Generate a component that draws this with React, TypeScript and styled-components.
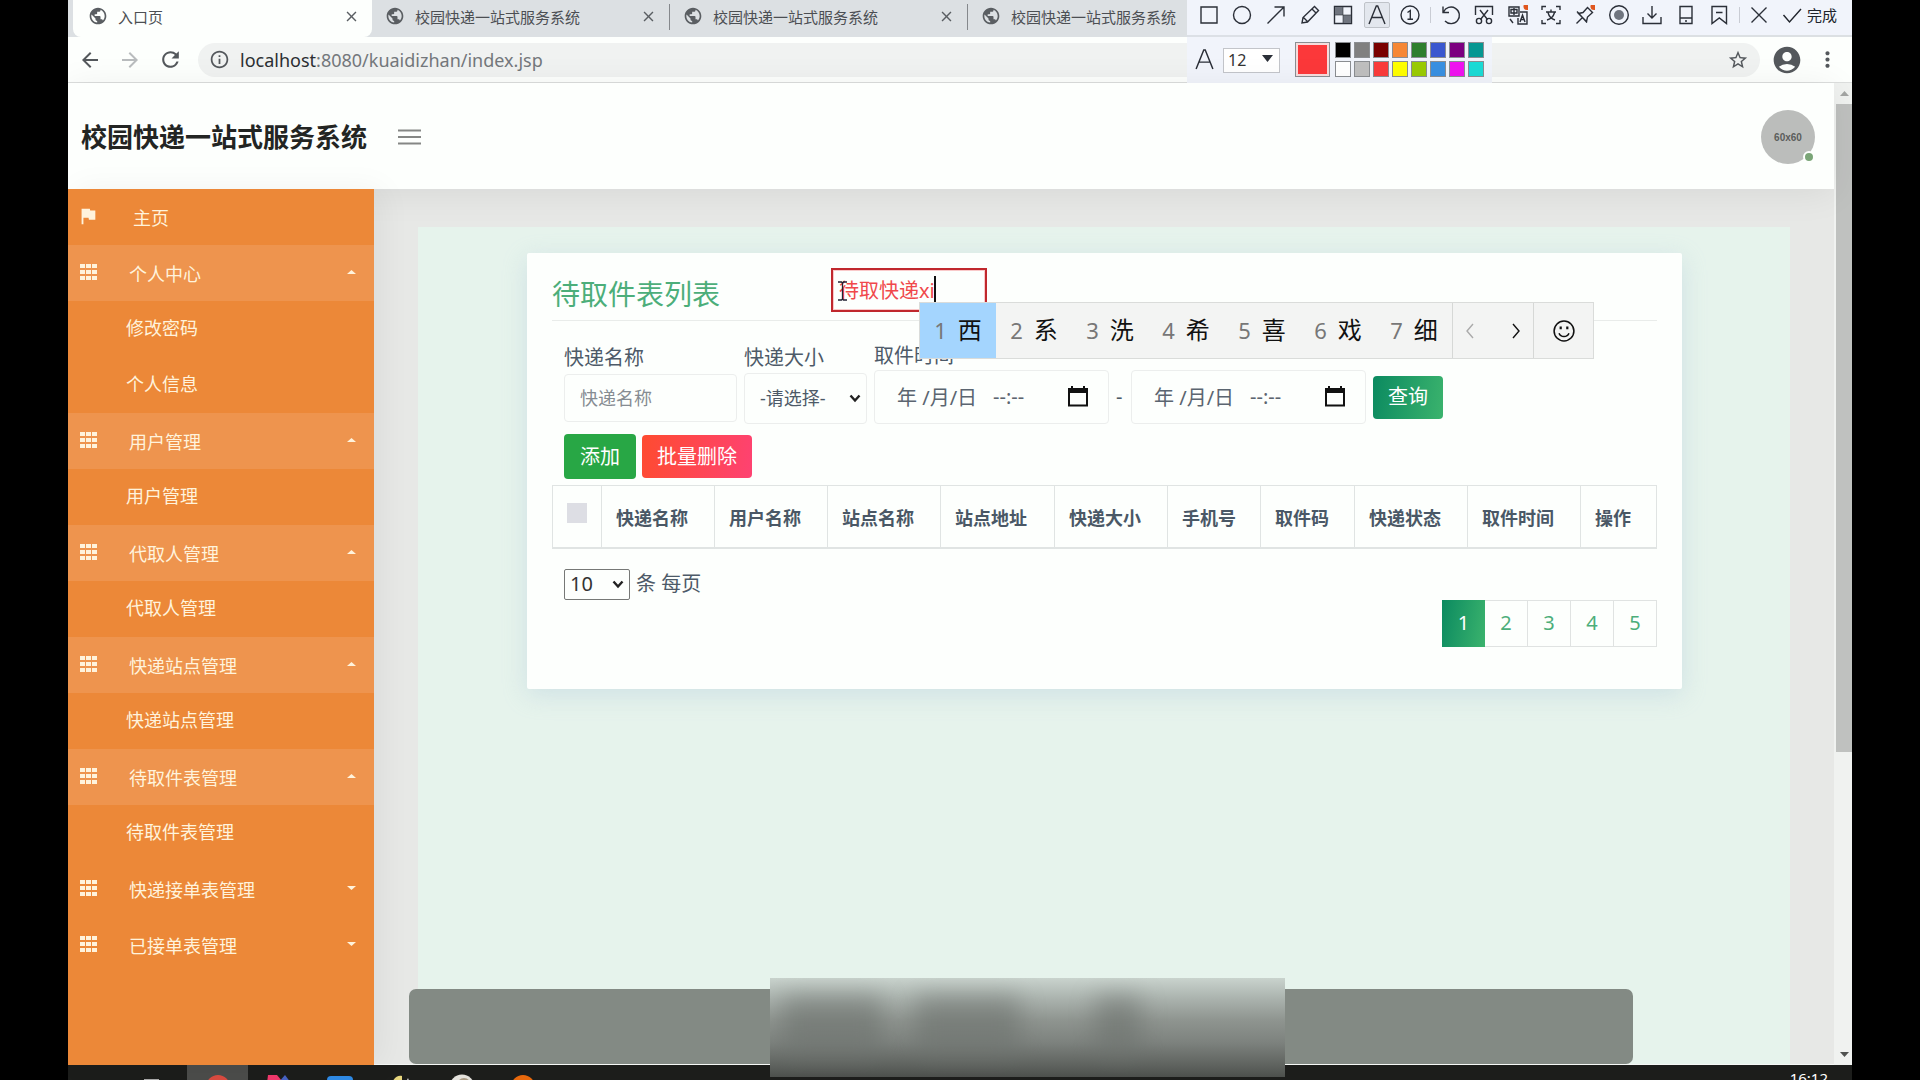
import React from "react";
import styled, { createGlobalStyle, css } from "styled-components";
import {
  MdPublic,
  MdArrowBack,
  MdArrowForward,
  MdRefresh,
  MdInfoOutline,
  MdStarBorder,
  MdAccountCircle,
  MdMoreVert,
  MdFlag,
  MdClose,
} from "react-icons/md";

const GlobalStyle = createGlobalStyle`
  *, *::before, *::after { box-sizing: border-box; }
  body {
    margin: 0;
    background: #000;
    font-family: "Noto Sans", "Noto Sans CJK SC", sans-serif;
    font-size: 20px;
    color: #4d5a68;
  }
  button, input, select { font: inherit; color: inherit; margin: 0; }
  button { border: 0; padding: 0; background: none; cursor: pointer; }
  a { color: inherit; text-decoration: none; }
  svg { display: block; flex: none; }
`;

const accent = "#4cae7a";
const greenGradient = "linear-gradient(100deg, #0b8a60, #3bb36d)";

/* ---------- window ---------- */

const Screen = styled.div`
  display: flex;
  flex-direction: column;
  position: relative;
  height: 100vh;
  margin: 0 68px;
  overflow: hidden;
  background: #fdfffd;
`;

const TabStrip = styled.div`
  display: flex;
  flex: none;
  height: 37px;
  padding-left: 5px;
  background: #dce0e3;
`;

const Tab = styled.div<{ $active?: boolean }>`
  display: flex;
  align-items: center;
  width: ${(p) => (p.$active ? 299 : 297)}px;
  height: 37px;
  padding: 0 12px 5px ${(p) => (p.$active ? 15 : 13)}px;
  gap: 10px;
  font-size: 15px;
  color: #4c4f53;
  background: ${(p) => (p.$active ? "#fdfffd" : "transparent")};
  border-radius: 0 0 8px 8px;
  svg { color: #5a5e62; }
`;

const TabTitle = styled.span`
  flex: 1;
  white-space: nowrap;
`;

const TabDivider = styled.span`
  width: 1px;
  height: 26px;
  margin-top: 4px;
  background: #85888c;
`;

const AddressRow = styled.div`
  display: flex;
  align-items: center;
  flex: none;
  height: 46px;
  padding: 0 12px 0 10px;
  border-bottom: 1px solid #dcdedd;
  color: #54585c;
`;

const NavButton = styled.button<{ $dim?: boolean }>`
  display: flex;
  justify-content: center;
  width: 24px;
  margin-right: 16px;
  color: ${(p) => (p.$dim ? "#b9bcbe" : "#54585c")};
`;

const AddressBar = styled.div`
  display: flex;
  align-items: center;
  flex: 1;
  height: 34px;
  padding: 0 11px;
  border-radius: 17px;
  background: #f0f2f1;
`;

const AddressText = styled.a`
  flex: 1;
  padding-left: 10px;
  font-family: "Noto Sans", sans-serif;
  font-size: 18px;
  line-height: 24px;
  color: #74787c;
  b { font-weight: 400; color: #2c2f32; }
`;

const BarButton = styled.button`
  display: flex;
  justify-content: center;
  color: #54585c;
`;

const BarActions = styled.div`
  display: flex;
  align-items: center;
  gap: 12px;
  padding-left: 11px;
`;

/* ---------- capture toolbar ---------- */

const Capture = styled.div`
  position: absolute;
  top: 0;
  right: 0;
  width: 665px;
  color: #2b2f38;
`;

const CaptureTools = styled.div`
  display: flex;
  align-items: center;
  height: 35px;
  padding: 0 10px 5px 5px;
  background: #f1f4fb;
`;

const ToolGroup = styled.div<{ $width: number }>`
  display: flex;
  width: ${(p) => p.$width}px;
`;

const Tool = styled.button<{ $on?: boolean }>`
  display: flex;
  flex: 1;
  justify-content: center;
  svg {
    box-sizing: content-box;
    padding: 2px;
    border: 1px solid ${(p) => (p.$on ? "#bfc3c9" : "transparent")};
    border-radius: 2px;
    background: ${(p) => (p.$on ? "#e3e7ee" : "none")};
  }
`;

const ToolDivider = styled.span`
  width: 1px;
  height: 16px;
  margin: 0 3px;
  background: #c9ccd4;
`;

const DoneButton = styled.button`
  display: flex;
  align-items: center;
  gap: 5px;
  margin-left: 7px;
  font-size: 15px;
  line-height: 20px;
  color: #20242c;
  white-space: nowrap;
`;

const CaptureOptions = styled.div`
  display: flex;
  align-items: center;
  width: 305px;
  height: 48px;
  padding: 2px 0 4px 7px;
  border-top: 2px solid #dce0e6;
  background: #f1f4fb;
`;

const SizeSelect = styled.div`
  position: relative;
  margin: 0 15px 0 8px;
  select {
    width: 57px;
    height: 25px;
    padding: 0 4px;
    appearance: none;
    border: 1px solid #c3c5ca;
    background: #fff;
    font-size: 16px;
    line-height: 22px;
    color: #333;
  }
  svg { position: absolute; right: 7px; top: 10px; pointer-events: none; }
`;

const Swatch = styled.button<{ $color: string; $large?: boolean }>`
  flex: none;
  width: ${(p) => (p.$large ? 35 : 16)}px;
  height: ${(p) => (p.$large ? 35 : 16)}px;
  border: 1px solid #8b8e92;
  background: ${(p) => p.$color};
  ${(p) => p.$large && css`box-shadow: inset 0 0 0 2px #f6dcdc;`}
`;

const Palette = styled.div`
  display: grid;
  grid-template-columns: repeat(8, 1fr);
  width: 149px;
  gap: 3px;
  margin-left: 5px;
`;

/* ---------- page ---------- */

const Viewport = styled.div`
  display: flex;
  flex: 1;
  min-height: 0;
`;

const Page = styled.div`
  display: flex;
  flex: 1;
  flex-direction: column;
  min-width: 0;
`;

const Header = styled.header`
  display: flex;
  align-items: center;
  flex: none;
  height: 106px;
  padding: 2px 19px 0 13px;
  position: relative;
  z-index: 1;
  background: #fdfffd;
  box-shadow: 0 4px 34px rgba(0, 0, 0, 0.07);
`;

const Brand = styled.h1`
  margin: 0 31px 0 0;
  font-size: 26px;
  line-height: 40px;
  font-weight: 700;
  color: #232523;
`;

const MenuToggle = styled.button`
  margin-right: auto;
  color: #858785;
`;

const Avatar = styled.button`
  display: flex;
  align-items: center;
  justify-content: center;
  position: relative;
  width: 54px;
  height: 54px;
  border-radius: 50%;
  background: #bbbdbb;
  font-family: "Liberation Sans", sans-serif;
  font-size: 10px;
  font-weight: 700;
  color: #5b5d5b;
  &::after {
    content: "";
    position: absolute;
    right: 0;
    bottom: 1px;
    width: 12px;
    height: 12px;
    border: 2px solid #fdfffd;
    border-radius: 50%;
    background: #7aa577;
  }
`;

const Body = styled.div`
  display: flex;
  flex: 1;
  min-height: 0;
`;

const Sidebar = styled.nav`
  flex: none;
  position: relative;
  z-index: 2;
  width: 306px;
  background: #ec8838;
  color: #fff3dc;
  box-shadow: 8px 0 30px rgba(0, 0, 0, 0.05);
`;

const MenuItem = styled.button<{ $open?: boolean; $home?: boolean }>`
  display: flex;
  align-items: center;
  width: 100%;
  height: 56px;
  padding: 0 18px 2px ${(p) => (p.$home ? 9 : 12)}px;
  font-size: 18px;
  line-height: 28px;
  text-align: left;
  background: ${(p) => (p.$open ? "#ee944e" : "transparent")};
  span { flex: 1; padding: 3px 0 0 ${(p) => (p.$home ? 34 : 32)}px; }
`;

const SubItem = styled.a`
  display: flex;
  align-items: center;
  height: 56px;
  padding: 0 0 2px 58px;
  font-size: 18px;
  line-height: 28px;
`;

const Main = styled.main`
  display: flex;
  flex: 1;
  min-width: 0;
  padding: 38px 44px 0;
  background: #e7e8e6;
  border-bottom: 1px solid #f6f8f6;
`;

const Panel = styled.div`
  flex: 1;
  min-width: 0;
  padding: 26px 108px 0 109px;
  background: #e6f3ec;
`;

const Card = styled.section`
  padding: 21px 25px 42px;
  border-radius: 2px;
  background: #fdfffd;
  box-shadow: 0 6px 24px rgba(160, 190, 215, 0.32);
`;

const CardTitle = styled.h2`
  margin: 0;
  padding-bottom: 6px;
  border-bottom: 1px solid #e9ecea;
  font-size: 28px;
  line-height: 40px;
  font-weight: 400;
  color: ${accent};
`;

const Filters = styled.form`
  display: flex;
  align-items: flex-end;
  gap: 7px;
  padding: 21px 0 0 12px;
`;

const Control = styled.div`
  display: flex;
  align-items: center;
  height: 54px;
`;

const Field = styled.div<{ $compact?: boolean }>`
  display: flex;
  flex-direction: column;
  label { line-height: 28px; white-space: nowrap; }
  ${(p) => p.$compact && css`${Control} { height: 52px; }`}
`;

const boxed = css`
  border: 1px solid #eceeed;
  border-radius: 4px;
  background: #fdfffd;
`;

const NameInput = styled.input`
  ${boxed}
  width: 173px;
  height: 48px;
  padding: 0 15px;
  font-size: 18px;
  &::placeholder { color: #868c92; opacity: 1; }
`;

const SelectBox = styled.div<{ $pager?: boolean }>`
  display: flex;
  position: relative;
  align-items: center;
  select {
    appearance: none;
    ${boxed}
    width: ${(p) => (p.$pager ? 66 : 123)}px;
    height: ${(p) => (p.$pager ? 31 : 51)}px;
    padding: 0 ${(p) => (p.$pager ? 5 : 15)}px;
    font-size: ${(p) => (p.$pager ? 20 : 18)}px;
    line-height: 28px;
    ${(p) => p.$pager && css`border-color: #767876; border-radius: 2px; color: #333;`}
  }
  svg { position: absolute; right: 6px; pointer-events: none; }
`;

const DateBox = styled.div`
  ${boxed}
  display: flex;
  align-items: center;
  width: 235px;
  height: 54px;
  padding: 0 20px 2px 22px;
  color: #111;
  input {
    width: 96px;
    padding: 0;
    border: 0;
    background: none;
    color: #5b6570;
  }
  input + input { flex: 1; min-width: 0; }
`;

const Dash = styled.span`
  width: 8px;
  line-height: 54px;
`;

const ActionButton = styled.button<{ $tone: "query" | "add" | "remove" }>`
  height: ${(p) => (p.$tone === "add" ? 45 : 43)}px;
  padding: 0 ${(p) => (p.$tone === "add" ? 16 : 15)}px;
  border-radius: 4px;
  line-height: 28px;
  color: #fff;
  white-space: nowrap;
  background: ${(p) =>
    ({
      query: greenGradient,
      add: "#28a745",
      remove: "linear-gradient(100deg, #fe4b30, #fe4272)",
    })[p.$tone]};
`;

const Actions = styled.div`
  display: flex;
  align-items: center;
  gap: 6px;
  padding: 10px 0 6px 12px;
`;

const Table = styled.table`
  width: 100%;
  table-layout: fixed;
  border-collapse: collapse;
  font-size: 18px;
  th {
    height: 62px;
    padding: 4px 0 0 14px;
    border: 1px solid #e0e4e3;
    border-bottom-width: 2px;
    text-align: left;
    font-weight: 700;
    line-height: 26px;
    white-space: nowrap;
    color: #4a5866;
  }
`;

const CheckAll = styled.input`
  display: block;
  appearance: none;
  width: 20px;
  height: 20px;
  margin: -10px 0 0;
  background: #dddee4;
`;

const PageSize = styled.div`
  display: flex;
  align-items: center;
  gap: 6px;
  padding: 20px 0 0 12px;
  line-height: 28px;
`;

const Pagination = styled.div`
  display: flex;
  justify-content: flex-end;
`;

const PageLink = styled.a<{ $active?: boolean }>`
  width: 43px;
  height: 47px;
  border: 1px solid #e0e3e2;
  border-left-width: ${(p) => (p.$active ? 1 : 0)}px;
  text-align: center;
  line-height: 44px;
  color: ${accent};
  ${(p) => p.$active && css`border-color: transparent; background: ${greenGradient} border-box; color: #fff;`}
`;

const Scrollbar = styled.div`
  display: flex;
  flex: none;
  flex-direction: column;
  align-items: center;
  width: 18px;
  padding-left: 2px;
  background: #f0f2f0;
`;

const ScrollThumb = styled.div`
  width: 100%;
  height: 66%;
  margin-bottom: auto;
  background: #bfc1bf;
`;

const ScrollArrow = styled.button<{ $dim?: boolean }>`
  display: flex;
  align-items: center;
  justify-content: center;
  flex: none;
  width: 16px;
  height: 21px;
  color: ${(p) => (p.$dim ? "#a3a5a3" : "#505250")};
`;

/* ---------- overlays ---------- */

const Annotation = styled.div`
  display: flex;
  align-items: center;
  position: absolute;
  left: 763px;
  top: 268px;
  width: 156px;
  height: 44px;
  padding: 0 0 2px 6px;
  border: 2px solid #c0282d;
  outline: 1px solid #f9c9c9;
  outline-offset: -3px;
  input {
    width: 95px;
    padding: 0;
    border: 0;
    background: none;
    color: #f0484b;
  }
  svg { position: absolute; left: 5px; top: 11px; }
`;

const Caret = styled.span`
  width: 2px;
  height: 26px;
  background: #111;
`;

const Ime = styled.div`
  display: flex;
  position: absolute;
  left: 851px;
  top: 302px;
  height: 57px;
  border: 1px solid #dadcda;
  background: #f3f4f3;
  color: #111;
`;

const Candidate = styled.button<{ $active?: boolean }>`
  display: flex;
  align-items: center;
  justify-content: center;
  gap: 11px;
  width: 76px;
  padding-bottom: 2px;
  font-size: 24px;
  line-height: 32px;
  background: ${(p) => (p.$active ? "#a4d5fe" : "none")};
  span { font-size: 22px; color: #777; }
`;

const ImeButtons = styled.div<{ $width: number }>`
  display: flex;
  align-items: center;
  justify-content: space-between;
  width: ${(p) => p.$width}px;
  padding: 0 ${(p) => (p.$width > 70 ? 7 : 19)}px;
  border-left: 1px solid #d6d8d6;
  button:disabled { color: #aaa; }
`;

const Caption = styled.div`
  position: absolute;
  left: 341px;
  right: 219px;
  bottom: 16px;
  height: 75px;
  border-radius: 7px;
  background: #838a84;
`;

const CaptionBlur = styled.div`
  position: absolute;
  left: 361px;
  top: -11px;
  width: 515px;
  height: 99px;
  overflow: hidden;
  background: linear-gradient(#c9d3cd 0, #a9b1ac 22%, #8f9590 42%, #7d827e 65%, #5f635f 88%, #4d504d);
`;

const Smudge = styled.i<{ $left: number; $width: number }>`
  position: absolute;
  top: 18px;
  left: ${(p) => p.$left}px;
  width: ${(p) => p.$width}px;
  height: 58px;
  background: #6b706c;
  opacity: 0.55;
  filter: blur(12px);
`;

const Taskbar = styled.footer`
  flex: none;
  display: flex;
  height: 15px;
  overflow: hidden;
  padding: 0 24px 0 58px;
  background: #1c1d1b;
  color: #fff;
`;

const TaskButton = styled.button<{ $active?: boolean }>`
  display: flex;
  align-items: flex-start;
  justify-content: center;
  width: 61px;
  height: 50px;
  padding-top: 9px;
  background: ${(p) => (p.$active ? "#4b4c4a" : "none")};
`;

const Clock = styled.time`
  margin-left: auto;
  padding-top: 3px;
  font-size: 15px;
  line-height: 20px;
`;

/* ---------- drawings ---------- */

const Stroke = ({ children, size = 20 }: { children: React.ReactNode; size?: number }) => (
  <svg width={size} height={size} viewBox="0 0 20 20" fill="none" stroke="currentColor" strokeWidth="1.4">
    {children}
  </svg>
);

const GridIcon = () => (
  <svg width="17" height="16" viewBox="0 0 17 16" fill="currentColor">
    {[0, 6, 12].map((x) => [0, 6, 12].map((y) => <rect key={`${x}-${y}`} x={x} y={y} width="5" height="4" />))}
  </svg>
);

const Triangle = ({ up, w = 9, h = 4 }: { up?: boolean; w?: number; h?: number }) => (
  <svg width={w} height={h} viewBox="0 0 10 5" preserveAspectRatio="none" fill="currentColor">
    <path d={up ? "M0 5 5 0l5 5z" : "M0 0h10L5 5z"} />
  </svg>
);

const Chevron = () => (
  <svg width="12" height="9" viewBox="0 0 12 9" fill="none" stroke="#222" strokeWidth="2.4">
    <path d="M1.500 1.500 6 6.500l4.500-5" />
  </svg>
);

const CalendarIcon = () => (
  <svg width="20" height="21" viewBox="0 0 20 21">
    <path d="M4 0v4M16 0v4" stroke="#111" strokeWidth="2" />
    <path d="M1 3h18v16.500H1z" fill="none" stroke="#111" strokeWidth="2" />
    <path d="M0 2h20v5H0z" fill="#111" />
  </svg>
);

const letterShape = <path d="M2 19 9.300 1h1.400L18 19M5 12.500h10" />;

const drawTools: [string, React.ReactNode][] = [
  ["矩形", <path d="M2 2h16v16H2z" />],
  ["椭圆", <circle cx="10" cy="10" r="8.500" />],
  ["箭头", <path d="M1.500 18.500 18 2M8.500 2H18v9.500" />],
  ["画笔", <path d="M2 18l1-5.500L14.500 1.500l4 4L7.500 17zM12 4l4 4M3.500 12.500l4 4" />],
  ["马赛克", <><path d="M1.500 1.500h17v17h-17z" /><path d="M2 2h8v8H2zM10 10h8v8h-8z" fill="#70757f" stroke="none" /><path d="M10 2v16M2 10h16" strokeWidth=".6" /></>],
  ["文字", letterShape],
  ["序号", <><circle cx="10" cy="10" r="9" /><path d="M7.500 7.500 10.300 5.500V14M7.500 14.200h5.500" /></>],
];

const editTools: [string, React.ReactNode][] = [
  ["撤销", <path d="M2 1.500v6h6M2.500 7A8.300 8.300 0 1 1 4 16" />],
  ["裁剪", <><path d="M1.500 10V1.500h17V10M6 5l7.500 9.500M14 5 6.500 14.500" /><circle cx="5" cy="16" r="2.600" /><circle cx="15" cy="16" r="2.600" /></>],
  ["翻译", <><path d="M1 2h10v9H1zM3 4.500h6v3.500H3zM6 3v7M12 7h7v12h-9v-6M12 17l2.500-7 2.500 7M12.800 14.500h3.500M2 14l3 4" /><circle cx="19" cy="1.500" r="3.500" fill="#e0561f" stroke="none" /></>],
  ["识别", <><path d="M1 5V1.500h4M15 1.500h4V5M19 15v3.500h-4M5 18.500H1V15" /><path d="M5 7h10M10 4.500V7M7 7.500c1 4 4 6.500 7 7.500M13.500 7.500c-1 4-4 6.500-7.500 7.500" /></>],
  ["固定", <><path d="M1.500 18.500 7 13M3.500 8.500l8 8 1-4.500 5-4.500-5-5L8 7.500zM2 6.500l10 11" /><circle cx="19" cy="1.500" r="3.500" fill="#e0561f" stroke="none" /></>],
  ["录制", <><circle cx="10" cy="10" r="9.300" /><circle cx="10" cy="10" r="5" fill="#70757f" stroke="none" /></>],
  ["保存", <path d="M10 1v12M5.500 8.500 10 13l4.500-4.500M1 12v6.500h18V12" />],
  ["手机", <path d="M4 1.500h12v17H4zM4 13h12M9 16h2" />],
  ["收藏", <path d="M3 1.500h14.500v17L10.300 13 3 18.500zM7 7.500h6.500" />],
];

const palette = [
  "#000", "#808080", "#7a0000", "#f68735", "#2e7f2e", "#3a57cf", "#7c0080", "#069792",
  "#fff", "#bfbfbf", "#fa3b3b", "#ff0", "#9acb04", "#3990e2", "#f014f0", "#1bdbd6",
];

const menu = [
  { title: "个人中心", items: ["修改密码", "个人信息"] },
  { title: "用户管理", items: ["用户管理"] },
  { title: "代取人管理", items: ["代取人管理"] },
  { title: "快递站点管理", items: ["快递站点管理"] },
  { title: "待取件表管理", items: ["待取件表管理"] },
  { title: "快递接单表管理", items: [] },
  { title: "已接单表管理", items: [] },
];

const columns: [string, number][] = [
  ["快递名称", 113], ["用户名称", 113], ["站点名称", 113], ["站点地址", 114], ["快递大小", 113],
  ["手机号", 93], ["取件码", 94], ["快递状态", 113], ["取件时间", 113], ["操作", 76],
];

const siteTitle = "校园快递一站式服务系统";

const DateField = ({ id, label }: { id: string; label: string }) => (
  <DateBox>
    <input id={id} aria-label={`${label}日期`} defaultValue="年 /月/日" />
    <input aria-label={`${label}时刻`} defaultValue="--:--" />
    <button type="button" aria-label="选择日期"><CalendarIcon /></button>
  </DateBox>
);

export default function App() {
  return (
    <>
      <GlobalStyle />
      <Screen>
        <TabStrip>
          <Tab $active>
            <MdPublic size={20} />
            <TabTitle>入口页</TabTitle>
            <button aria-label="关闭"><MdClose size={17} /></button>
          </Tab>
          {[0, 1, 2].map((n) => (
            <React.Fragment key={n}>
              {n > 0 && <TabDivider />}
              <Tab>
                <MdPublic size={20} />
                <TabTitle>{siteTitle}</TabTitle>
                {n < 2 && <button aria-label="关闭"><MdClose size={17} /></button>}
              </Tab>
            </React.Fragment>
          ))}
        </TabStrip>
        <AddressRow>
          <NavButton aria-label="后退"><MdArrowBack size={24} /></NavButton>
          <NavButton aria-label="前进" $dim><MdArrowForward size={24} /></NavButton>
          <NavButton aria-label="刷新"><MdRefresh size={25} /></NavButton>
          <AddressBar>
            <MdInfoOutline size={21} />
            <AddressText href="#"><b>localhost</b>:8080/kuaidizhan/index.jsp</AddressText>
            <BarButton aria-label="收藏此页"><MdStarBorder size={22} /></BarButton>
          </AddressBar>
          <BarActions>
            <BarButton aria-label="用户"><MdAccountCircle size={32} /></BarButton>
            <BarButton aria-label="菜单"><MdMoreVert size={25} /></BarButton>
          </BarActions>
        </AddressRow>

        <Viewport>
          <Page>
            <Header>
              <Brand>{siteTitle}</Brand>
              <MenuToggle aria-label="切换菜单">
                <svg width="23" height="16" viewBox="0 0 23 16" stroke="currentColor" strokeWidth="2">
                  <path d="M0 1.500h23M0 8h23M0 14.500h23" />
                </svg>
              </MenuToggle>
              <Avatar>60x60</Avatar>
            </Header>
            <Body>
              <Sidebar>
                <MenuItem $home><MdFlag size={22} /><span>主页</span></MenuItem>
                {menu.map(({ title, items }) => (
                  <React.Fragment key={title}>
                    <MenuItem $open={items.length > 0}>
                      <GridIcon />
                      <span>{title}</span>
                      <Triangle up={items.length > 0} />
                    </MenuItem>
                    {items.map((item) => <SubItem key={item} href="#">{item}</SubItem>)}
                  </React.Fragment>
                ))}
              </Sidebar>
              <Main>
                <Panel>
                  <Card>
                    <CardTitle>待取件表列表</CardTitle>
                    <Filters>
                      <Field $compact>
                        <label htmlFor="name">快递名称</label>
                        <Control><NameInput id="name" placeholder="快递名称" /></Control>
                      </Field>
                      <Field $compact>
                        <label htmlFor="size">快递大小</label>
                        <Control>
                          <SelectBox>
                            <select id="size"><option>-请选择-</option></select>
                            <Chevron />
                          </SelectBox>
                        </Control>
                      </Field>
                      <Field>
                        <label htmlFor="from">取件时间</label>
                        <DateField id="from" label="起始" />
                      </Field>
                      <Dash>-</Dash>
                      <DateField id="to" label="截止" />
                      <Control><ActionButton type="button" $tone="query">查询</ActionButton></Control>
                    </Filters>
                    <Actions>
                      <ActionButton $tone="add">添加</ActionButton>
                      <ActionButton $tone="remove">批量删除</ActionButton>
                    </Actions>
                    <Table>
                      <colgroup>
                        <col width={49} />
                        {columns.map(([name, width]) => <col key={name} width={width} />)}
                      </colgroup>
                      <thead>
                        <tr>
                          <th><CheckAll type="checkbox" aria-label="全选" /></th>
                          {columns.map(([name]) => <th key={name}>{name}</th>)}
                        </tr>
                      </thead>
                    </Table>
                    <PageSize>
                      <SelectBox $pager>
                        <select id="page-size"><option>10</option></select>
                        <Chevron />
                      </SelectBox>
                      <label htmlFor="page-size">条 每页</label>
                    </PageSize>
                    <Pagination>
                      {[1, 2, 3, 4, 5].map((n) => <PageLink key={n} href="#" $active={n === 1}>{n}</PageLink>)}
                    </Pagination>
                  </Card>
                </Panel>
              </Main>
            </Body>
          </Page>
          <Scrollbar>
            <ScrollArrow aria-label="向上" $dim><Triangle up h={5} /></ScrollArrow>
            <ScrollThumb />
            <ScrollArrow aria-label="向下"><Triangle h={5} /></ScrollArrow>
          </Scrollbar>
        </Viewport>

        <Taskbar>
          <TaskButton aria-label="任务视图">
            <svg width="36" height="24" viewBox="0 0 36 24"><path d="M6 6h13v13H6z" fill="none" stroke="#aaa" strokeWidth="2" /></svg>
          </TaskButton>
          <TaskButton aria-label="浏览器" $active>
            <svg width="26" height="26" viewBox="0 0 26 26"><circle cx="13" cy="13" r="12" fill="#d94b40" /><circle cx="13" cy="14" r="5" fill="#4a86e8" /></svg>
          </TaskButton>
          <TaskButton aria-label="开发工具">
            <svg width="28" height="26" viewBox="0 0 28 26"><path d="M3 1h9l5 6-4 10H1z" fill="#f0386b" /><path d="m20 1 6 8-6 12-7-12z" fill="#4763c4" /></svg>
          </TaskButton>
          <TaskButton aria-label="文档">
            <svg width="28" height="26" viewBox="0 0 28 26"><rect x="1" y="2" width="26" height="24" rx="4" fill="#2f8be6" /></svg>
          </TaskButton>
          <TaskButton aria-label="数据库">
            <svg width="26" height="26" viewBox="0 0 26 26"><path d="M2 14C5 4 9 1 14 2v14z" fill="#e8d77e" /><path d="m18 8 2-4 3 8z" fill="#ddd" /></svg>
          </TaskButton>
          <TaskButton aria-label="聊天">
            <svg width="26" height="26" viewBox="0 0 26 26"><circle cx="13" cy="13" r="12.500" fill="#e4e2dc" /><circle cx="15" cy="11" r="7" fill="#a99a84" /></svg>
          </TaskButton>
          <TaskButton aria-label="服务器">
            <svg width="24" height="26" viewBox="0 0 24 26"><circle cx="12" cy="13" r="12" fill="#e8680c" /><circle cx="12" cy="13" r="7" fill="#8f3c06" /></svg>
          </TaskButton>
          <Clock>16:12</Clock>
        </Taskbar>

        <Caption>
          <CaptionBlur>
            <Smudge $left={12} $width={100} />
            <Smudge $left={145} $width={105} />
            <Smudge $left={325} $width={46} />
          </CaptionBlur>
        </Caption>

        <Capture>
          <CaptureTools>
            <ToolGroup $width={235}>
              {drawTools.map(([name, shape]) => (
                <Tool key={name} aria-label={name} $on={name === "文字"}><Stroke>{shape}</Stroke></Tool>
              ))}
            </ToolGroup>
            <ToolDivider />
            <ToolGroup $width={302}>
              {editTools.map(([name, shape]) => (
                <Tool key={name} aria-label={name}><Stroke>{shape}</Stroke></Tool>
              ))}
            </ToolGroup>
            <ToolDivider />
            <ToolGroup $width={32}>
              <Tool aria-label="取消"><Stroke><path d="m2.500 2.500 15 15M17.500 2.500l-15 15" /></Stroke></Tool>
            </ToolGroup>
            <DoneButton><Stroke><path d="m1.500 10 6 7L19 4" /></Stroke>完成</DoneButton>
          </CaptureTools>
          <CaptureOptions>
            <Stroke size={21}>{letterShape}</Stroke>
            <SizeSelect>
              <select aria-label="字号"><option>12</option></select>
              <Triangle w={11} h={7} />
            </SizeSelect>
            <Swatch $large $color="#fc383a" aria-label="当前颜色" />
            <Palette>
              {palette.map((c) => <Swatch key={c} $color={c} aria-label={c} />)}
            </Palette>
          </CaptureOptions>
        </Capture>

        <Annotation>
          <input aria-label="标注文字" defaultValue="待取快递xi" />
          <Caret />
          <svg width="9" height="20" viewBox="0 0 9 20" fill="none" stroke="#223" strokeWidth="1.3">
            <path d="M0 1h3.500l1 1 1-1H9M4.500 2v16M0 19h3.500l1-1 1 1H9" />
          </svg>
        </Annotation>

        <Ime>
          {["西", "系", "洗", "希", "喜", "戏", "细"].map((c, i) => (
            <Candidate key={c} $active={i === 0}><span>{i + 1}</span>{c}</Candidate>
          ))}
          <ImeButtons $width={81}>
            <button aria-label="上一页" disabled>
              <Stroke><path d="m13 3-6 7 6 7" /></Stroke>
            </button>
            <button aria-label="下一页"><Stroke><path d="m7 3 6 7-6 7" /></Stroke></button>
          </ImeButtons>
          <ImeButtons $width={60}>
            <button aria-label="表情">
              <Stroke size={22}>
                <circle cx="10" cy="10" r="9" />
                <path d="M5.500 12c1.500 4 7.500 4 9 0" />
                <path d="M7 6v2.500M13 6v2.500" strokeWidth="2" />
              </Stroke>
            </button>
          </ImeButtons>
        </Ime>
      </Screen>
    </>
  );
}
